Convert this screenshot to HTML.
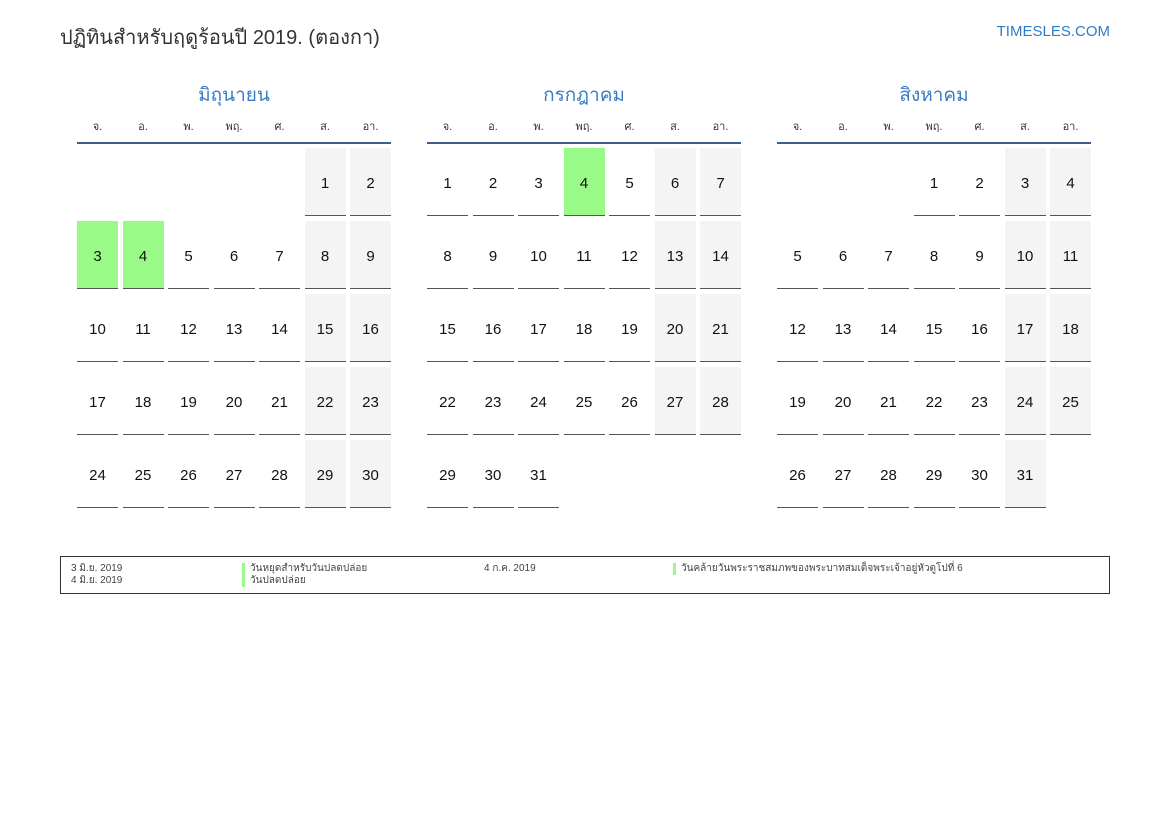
<!DOCTYPE html>
<html><head><meta charset="utf-8"><style>
body{margin:0;width:1169px;height:827px;background:#fff;font-family:"Liberation Sans",sans-serif;position:relative;overflow:hidden}
.t{position:absolute;left:60px;top:21px;font-size:20px;color:#333}
.logo{position:absolute;right:59px;top:23px;font-size:15px;color:#2f7cc4}
.m{position:absolute;top:83px;width:314px}
.mt{text-align:center;font-size:19px;color:#3a7cc4;height:26px;line-height:26px}
.dn{display:grid;grid-template-columns:repeat(7,41px);column-gap:4.5px;font-size:11px;color:#333;text-align:center;margin-top:7px;height:26px;line-height:22px;border-bottom:2px solid #3d5f86}
.g{display:grid;grid-template-columns:repeat(7,41px);grid-auto-rows:68px;gap:5px 4.5px;margin-top:4px}
.g div{border-bottom:1px solid #555;text-align:center;line-height:71px;height:67px;overflow:visible;font-size:15px;color:#111}
.g div.e{border:none}
.g div.w{background:#f4f4f4}
.g div.h{background:#99fa88}
.lg{position:absolute;left:60px;top:556px;width:1048px;height:36px;border:1px solid #333;font-size:10px;color:#444}
.lg span{position:absolute;line-height:12px}
.b{border-left:3px solid #99fa88;padding-left:5px}
</style></head><body>
<div class="t">ปฏิทินสำหรับฤดูร้อนปี 2019. (ตองกา)</div>
<div class="logo">TIMESLES.COM</div>

<div class="m" style="left:77px"><div class="mt">มิถุนายน</div>
<div class="dn"><span>จ.</span><span>อ.</span><span>พ.</span><span>พฤ.</span><span>ศ.</span><span>ส.</span><span>อา.</span></div>
<div class="g">
<div class="e"></div><div class="e"></div><div class="e"></div><div class="e"></div><div class="e"></div><div class="w">1</div><div class="w">2</div>
<div class="h">3</div><div class="h">4</div><div>5</div><div>6</div><div>7</div><div class="w">8</div><div class="w">9</div>
<div>10</div><div>11</div><div>12</div><div>13</div><div>14</div><div class="w">15</div><div class="w">16</div>
<div>17</div><div>18</div><div>19</div><div>20</div><div>21</div><div class="w">22</div><div class="w">23</div>
<div>24</div><div>25</div><div>26</div><div>27</div><div>28</div><div class="w">29</div><div class="w">30</div>
</div></div>

<div class="m" style="left:427px"><div class="mt">กรกฎาคม</div>
<div class="dn"><span>จ.</span><span>อ.</span><span>พ.</span><span>พฤ.</span><span>ศ.</span><span>ส.</span><span>อา.</span></div>
<div class="g">
<div>1</div><div>2</div><div>3</div><div class="h">4</div><div>5</div><div class="w">6</div><div class="w">7</div>
<div>8</div><div>9</div><div>10</div><div>11</div><div>12</div><div class="w">13</div><div class="w">14</div>
<div>15</div><div>16</div><div>17</div><div>18</div><div>19</div><div class="w">20</div><div class="w">21</div>
<div>22</div><div>23</div><div>24</div><div>25</div><div>26</div><div class="w">27</div><div class="w">28</div>
<div>29</div><div>30</div><div>31</div>
</div></div>

<div class="m" style="left:777px"><div class="mt">สิงหาคม</div>
<div class="dn"><span>จ.</span><span>อ.</span><span>พ.</span><span>พฤ.</span><span>ศ.</span><span>ส.</span><span>อา.</span></div>
<div class="g">
<div class="e"></div><div class="e"></div><div class="e"></div><div>1</div><div>2</div><div class="w">3</div><div class="w">4</div>
<div>5</div><div>6</div><div>7</div><div>8</div><div>9</div><div class="w">10</div><div class="w">11</div>
<div>12</div><div>13</div><div>14</div><div>15</div><div>16</div><div class="w">17</div><div class="w">18</div>
<div>19</div><div>20</div><div>21</div><div>22</div><div>23</div><div class="w">24</div><div class="w">25</div>
<div>26</div><div>27</div><div>28</div><div>29</div><div>30</div><div class="w">31</div>
</div></div>

<div class="lg">
<span style="left:10px;top:6px">3 มิ.ย. 2019</span>
<span style="left:10px;top:18px">4 มิ.ย. 2019</span>
<span class="b" style="left:181px;top:6px">วันหยุดสำหรับวันปลดปล่อย</span>
<span class="b" style="left:181px;top:18px">วันปลดปล่อย</span>
<span style="left:423px;top:6px">4 ก.ค. 2019</span>
<span class="b" style="left:612px;top:6px">วันคล้ายวันพระราชสมภพของพระบาทสมเด็จพระเจ้าอยู่หัวตูโปที่ 6</span>
</div>
</body></html>
